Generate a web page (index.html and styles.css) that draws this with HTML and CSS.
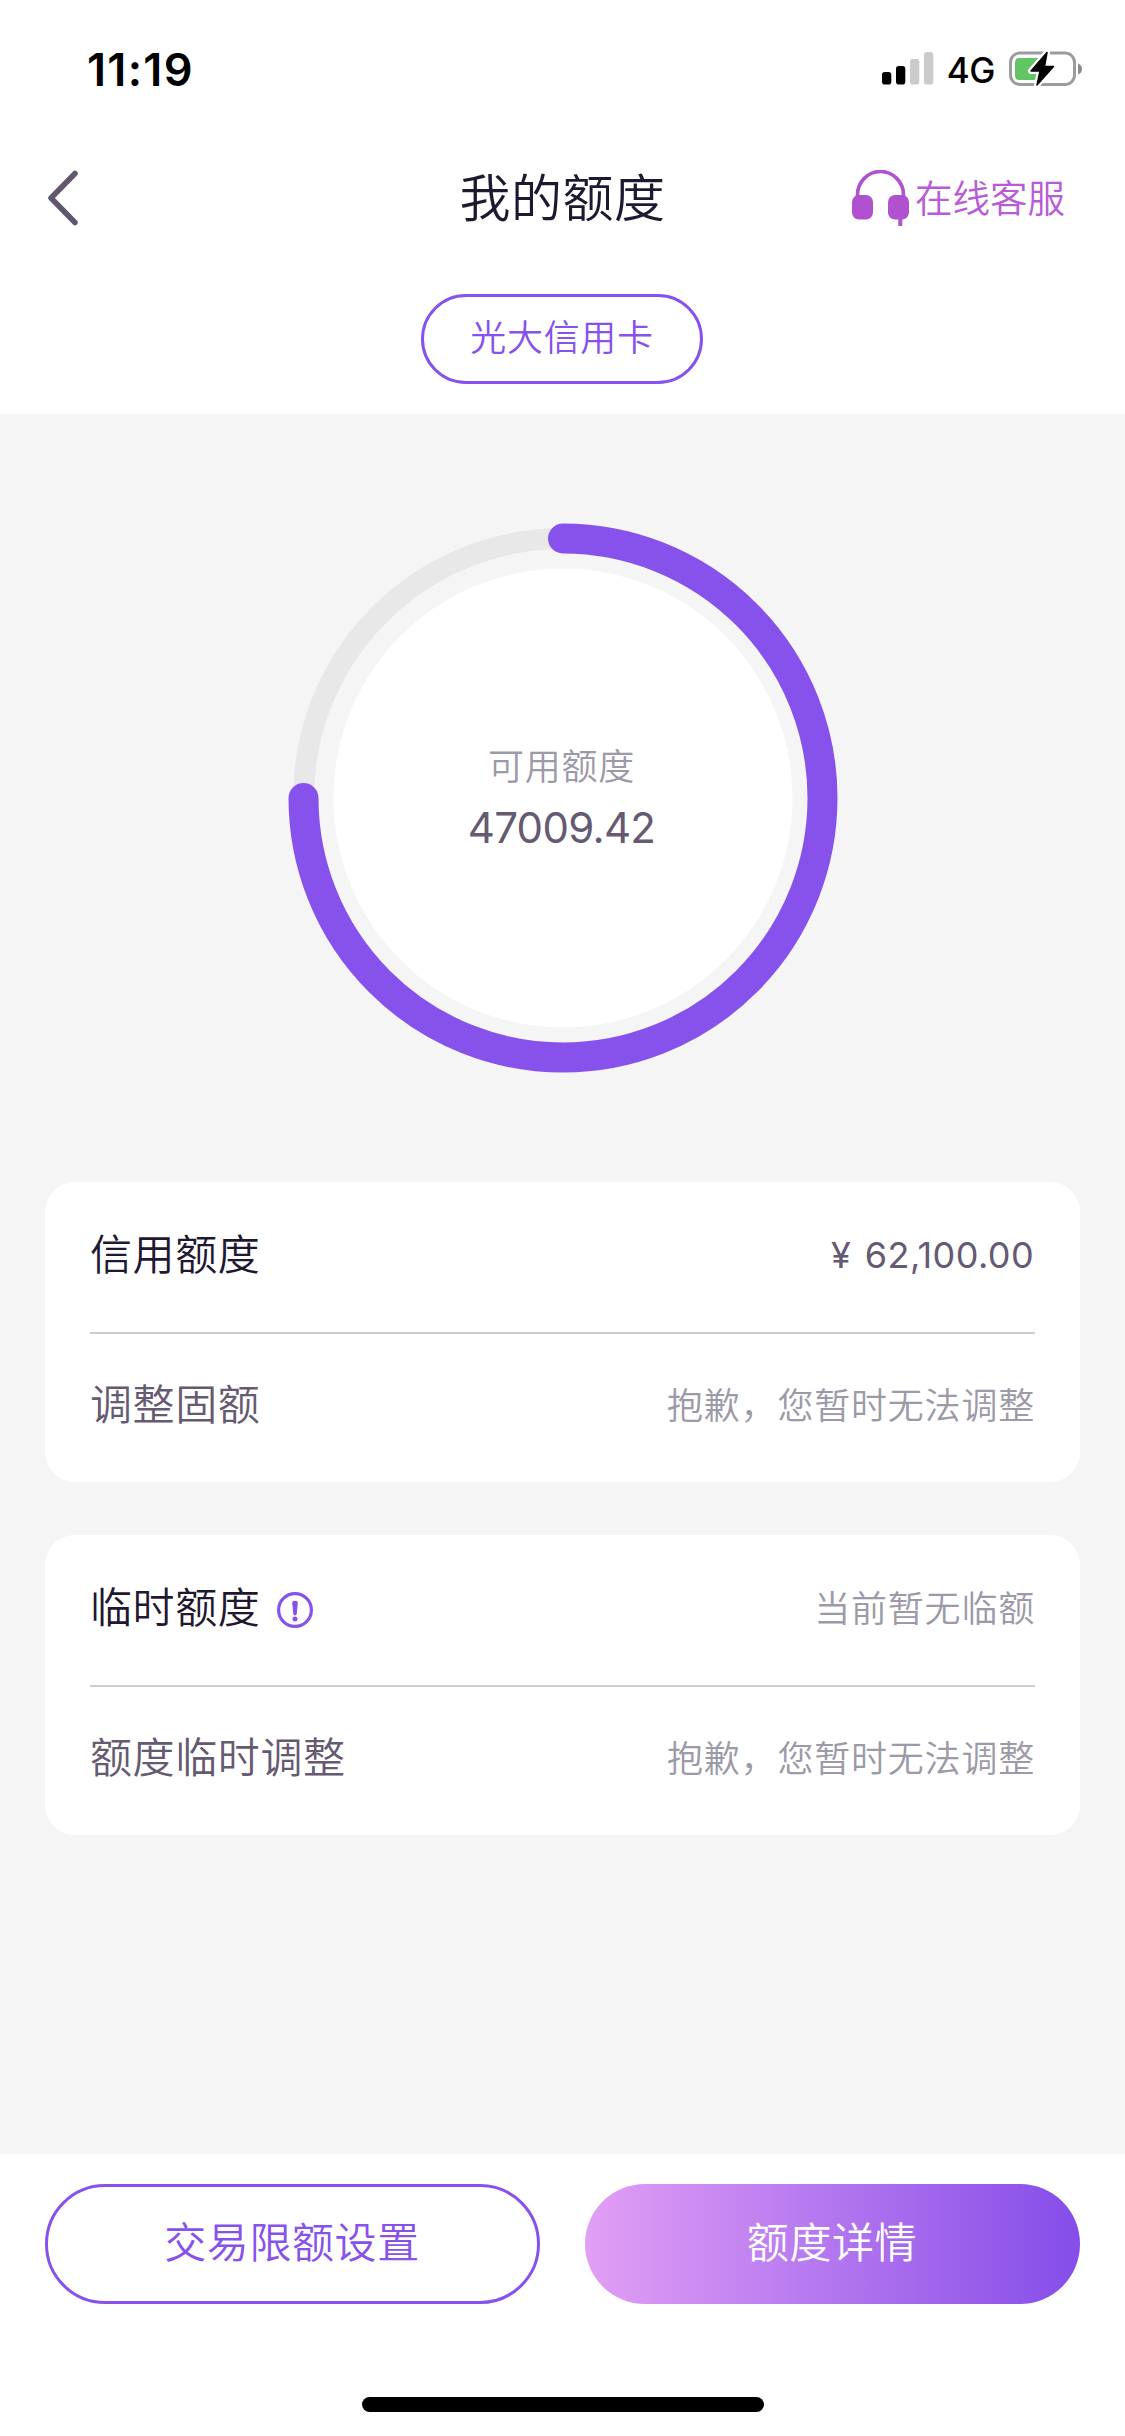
FILE: index.html
```html
<!DOCTYPE html>
<html lang="zh-CN">
<head>
<meta charset="utf-8">
<title>我的额度</title>
<link rel="stylesheet" href="styles.css">
</head>
<body>
<div class="screen">
  <div class="status-bar">
    <span class="time">11:19</span>
    <div class="indicators">
      <svg class="signal" width="52" height="34" viewBox="0 0 52 34">
        <rect x="0" y="20" width="9.3" height="12.5" rx="2.8" fill="#000"/>
        <rect x="14" y="14" width="9.3" height="18.5" rx="2.8" fill="#000"/>
        <rect x="28" y="7" width="9.3" height="25.5" rx="2.8" fill="#cbcbcb"/>
        <rect x="42" y="0" width="9.3" height="32.5" rx="2.8" fill="#cbcbcb"/>
      </svg>
      <span class="network">4G</span>
      <svg class="battery" width="74" height="36" viewBox="0 0 74 36">
        <rect x="1.5" y="2" width="64" height="31.5" rx="9.5" fill="none" stroke="#9c9c9c" stroke-width="3"/>
        <path d="M10 7H35V29H10Q6 29 6 24V12Q6 7 10 7Z" fill="#63c466"/>
        <path d="M69 12.5Q73 14 73 18T69 23.5Z" fill="#8c8c8c"/>
        <path d="M38 1.5 22 20H31L28 34 44.500 15.500H35.500Z" fill="#000" stroke="#fff" stroke-width="6" stroke-linejoin="round"/>
        <path d="M38 1.5 22 20H31L28 34 44.500 15.500H35.500Z" fill="#000" stroke="#000" stroke-width="1.500" stroke-linejoin="round"/>
      </svg>
    </div>
  </div>

  <header class="nav">
    <svg class="back" width="34" height="58" viewBox="0 0 34 58">
      <path d="M29 4.500 5 29 29 53.500" fill="none" stroke="#62566f" stroke-width="5.500" stroke-linecap="round" stroke-linejoin="round"/>
    </svg>
    <h1 class="title">我的额度</h1>
    <div class="service">
      <svg width="58" height="57" viewBox="0 0 58 57">
        <path d="M5.500 28V25A23 23.500 0 0 1 51.500 25V28" fill="none" stroke="#b052d0" stroke-width="3.600"/>
        <rect x="0" y="25" width="21" height="24.500" rx="7" fill="#b052d0"/>
        <rect x="36" y="25" width="21" height="24.500" rx="7" fill="#b052d0"/>
        <rect x="46.300" y="46" width="4" height="10" fill="#b052d0"/>
      </svg>
      <span class="service-text">在线客服</span>
    </div>
  </header>

  <div class="tabs"><span class="tab">光大信用卡</span></div>

  <main class="content">
    <div class="gauge">
      <svg class="ring" width="550" height="550" viewBox="0 0 550 550">
        <circle cx="275" cy="275" r="259.500" fill="none" stroke="#e8e8e8" stroke-width="21"/>
        <circle cx="275" cy="275" r="229.500" fill="#fff"/>
        <path d="M275 15.500A259.500 259.500 0 1 1 15.500 275" fill="none" stroke="#8751ec" stroke-width="30" stroke-linecap="round"/>
      </svg>
      <div class="gauge-text">
        <span class="gauge-label">可用额度</span>
        <span class="gauge-value">47009.42</span>
      </div>
    </div>

    <section class="card">
      <div class="row">
        <span class="label strong">信用额度</span>
        <span class="value amount">¥ 62,100.00</span>
      </div>
      <div class="row">
        <span class="label">调整固额</span>
        <span class="value">抱歉，您暂时无法调整</span>
      </div>
    </section>

    <section class="card">
      <div class="row">
        <span class="label strong">临时额度</span>
        <svg class="info" width="36" height="36" viewBox="0 0 36 36">
          <circle cx="18" cy="18" r="16.400" fill="none" stroke="#8751ec" stroke-width="3.200"/>
          <path d="M15.200 10.500Q15.200 8.700 18 8.700T20.800 10.500L19.800 21.500Q19.500 23.500 18 23.500T16.200 21.500Z" fill="#8751ec"/>
          <circle cx="18" cy="27" r="2.500" fill="#8751ec"/>
        </svg>
        <span class="value">当前暂无临额</span>
      </div>
      <div class="row">
        <span class="label">额度临时调整</span>
        <span class="value">抱歉，您暂时无法调整</span>
      </div>
    </section>
  </main>

  <footer class="footer">
    <div class="actions">
      <button class="btn outline">交易限额设置</button>
      <button class="btn filled">额度详情</button>
    </div>
    <div class="home-indicator"></div>
  </footer>
</div>
</body>
</html>
```
FILE: styles.css
```css
* { box-sizing: border-box; }
body {
  margin: 0;
  background: #fff;
  font-family: Inter, "Noto Sans CJK SC", sans-serif;
  font-weight: 350;
}
svg { display: block; flex: none; }
.screen {
  width: 1125px;
  height: 2436px;
  display: flex;
  flex-direction: column;
}
.status-bar {
  height: 138px;
  padding: 0 42px 0 87px;
  display: flex;
  align-items: center;
  justify-content: space-between;
}
.time {
  padding-top: 1px;
  font-size: 45px;
  line-height: 54px;
  font-weight: 600;
  letter-spacing: 1.3px;
}
.indicators { display: flex; align-items: center; }
.network {
  margin: 1px 14px 0 13px;
  font-size: 35px;
  line-height: 40px;
  font-weight: 500;
  letter-spacing: -0.5px;
}
.nav {
  height: 120px;
  padding: 0 46px;
  display: grid;
  grid-template-columns: 1fr auto 1fr;
  align-items: center;
}
.title {
  margin: 0;
  padding-top: 1px;
  font-size: 51px;
  line-height: 60px;
  font-weight: 350;
  letter-spacing: 0.5px;
  color: #1e1830;
}
.service {
  justify-self: end;
  margin-right: 14px;
  display: flex;
  align-items: center;
  gap: 5px;
  font-size: 37.5px;
  line-height: 44px;
  color: #b75bd6;
}
.service-text { padding-top: 2px; }
.tabs {
  height: 156px;
  padding: 36px 1px 0 0;
  display: flex;
  justify-content: center;
  align-items: flex-start;
}
.tab {
  width: 282px;
  height: 90px;
  border: 3px solid #8751ec;
  border-radius: 45px;
  font-size: 36px;
  line-height: 82px;
  letter-spacing: 0.7px;
  text-align: center;
  color: #8751ec;
}
.content {
  flex: 1;
  padding: 109px 45px 0;
  background: #f5f5f5;
}
.gauge { display: grid; width: 550px; margin: 0 auto 109px; }
.ring, .gauge-text { grid-area: 1 / 1; }
.gauge-text {
  z-index: 1;
  padding: 220px 2px 0 0;
  display: flex;
  flex-direction: column;
  align-items: center;
}
.gauge-label {
  font-size: 36px;
  line-height: 48px;
  letter-spacing: 0.8px;
  color: #9c99a8;
}
.gauge-value {
  margin-top: 9px;
  font-size: 42px;
  line-height: 56px;
  font-weight: 400;
  letter-spacing: -0.7px;
  color: #655a72;
}
.card {
  height: 300px;
  margin-bottom: 53px;
  padding: 0 45px;
  border-radius: 30px;
  background: #fff;
}
.row {
  height: 150px;
  padding-bottom: 4px;
  display: flex;
  align-items: center;
}
.row + .row { border-top: 2px solid #cdcdcd; padding-bottom: 6px; }
.label {
  font-size: 42px;
  line-height: 56px;
  letter-spacing: 0.6px;
  color: #655a72;
}
.strong { color: #1e1830; }
.info { margin: 4px 0 0 17px; }
.value {
  margin-left: auto;
  padding-top: 1px;
  font-size: 36px;
  line-height: 48px;
  letter-spacing: 0.8px;
  color: #9c99a8;
}
.amount {
  padding: 0 1px 0 0;
  font-weight: 400;
  letter-spacing: 0.4px;
  word-spacing: 3px;
  color: #655a72;
}
.footer {
  height: 282px;
  padding: 30px 45px 24px;
  display: flex;
  flex-direction: column;
  justify-content: space-between;
}
.actions { display: grid; grid-template-columns: 1fr 1fr; gap: 45px; }
.btn {
  height: 120px;
  padding: 0 1px 10px 0;
  border: 0;
  border-radius: 60px;
  font: inherit;
  font-size: 42px;
  letter-spacing: 0.6px;
}
.outline { border: 3px solid #8751ec; background: #fff; color: #8751ec; }
.filled { background: linear-gradient(90deg, #e29ff5, #ae72ee 55%, #854de9); color: #fff; }
.home-indicator {
  align-self: center;
  width: 402px;
  height: 15px;
  border-radius: 8px;
  background: #000;
}
```
